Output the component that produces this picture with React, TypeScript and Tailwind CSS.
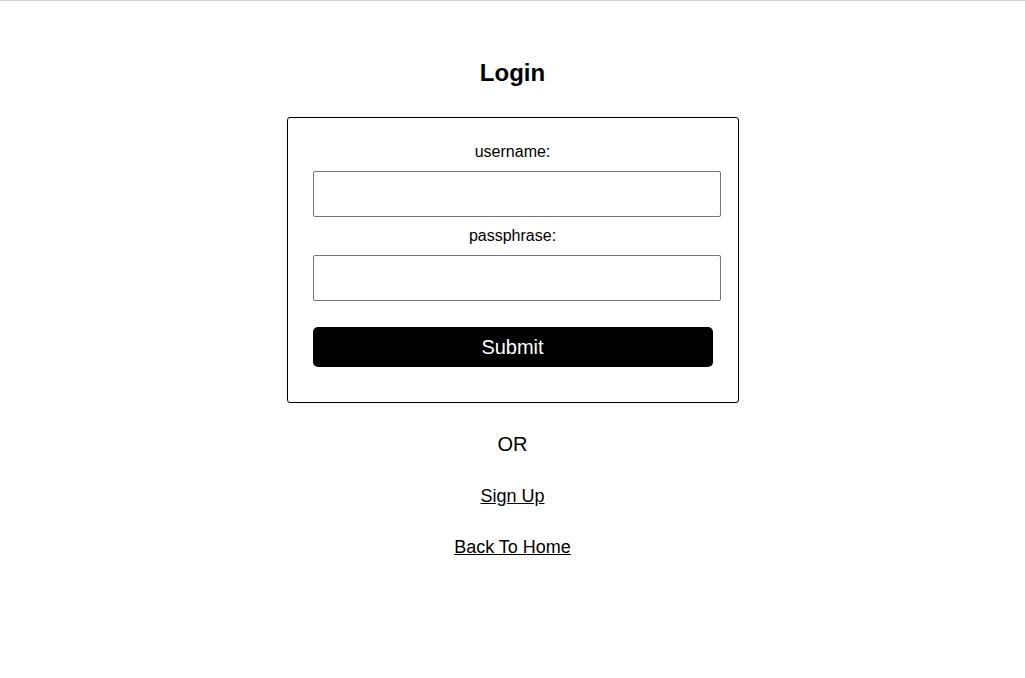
export default function App() {
  return (
    <div className="min-h-[678px] border-t border-[#d4d4d4] bg-white font-['Liberation_Sans',Arial,sans-serif] text-black">
      <div className="flex flex-col items-center">
        <h1 className="mt-[58px] text-[24px] font-bold leading-[28px]">Login</h1>

        <form
          onSubmit={(e) => e.preventDefault()}
          className="mt-[30px] flex w-[452px] flex-col rounded-[3px] border border-black px-[25px] pb-[35px] pt-[25px] shadow-[0_0_8px_rgba(0,0,0,0.06)]"
        >
          <label className="text-center text-[16px] leading-[18px]">username:</label>
          <input
            type="text"
            className="mt-[10px] h-[46px] w-[408px] rounded-[2px] border border-[#767676] px-2"
          />
          <label className="mt-[10px] text-center text-[16px] leading-[18px]">passphrase:</label>
          <input
            type="password"
            className="mt-[10px] h-[46px] w-[408px] rounded-[2px] border border-[#767676] px-2"
          />
          <button
            type="submit"
            className="mt-[26px] h-[40px] w-[400px] rounded-[5px] bg-black text-[20px] text-white"
          >
            Submit
          </button>
        </form>

        <p className="mt-[30px] text-[20px] leading-[23px]">OR</p>
        <a href="#" className="mt-[30px] text-[18px] leading-[21px] underline">
          Sign Up
        </a>
        <a href="#" className="mt-[30px] text-[18px] leading-[21px] underline">
          Back To Home
        </a>
      </div>
    </div>
  );
}
